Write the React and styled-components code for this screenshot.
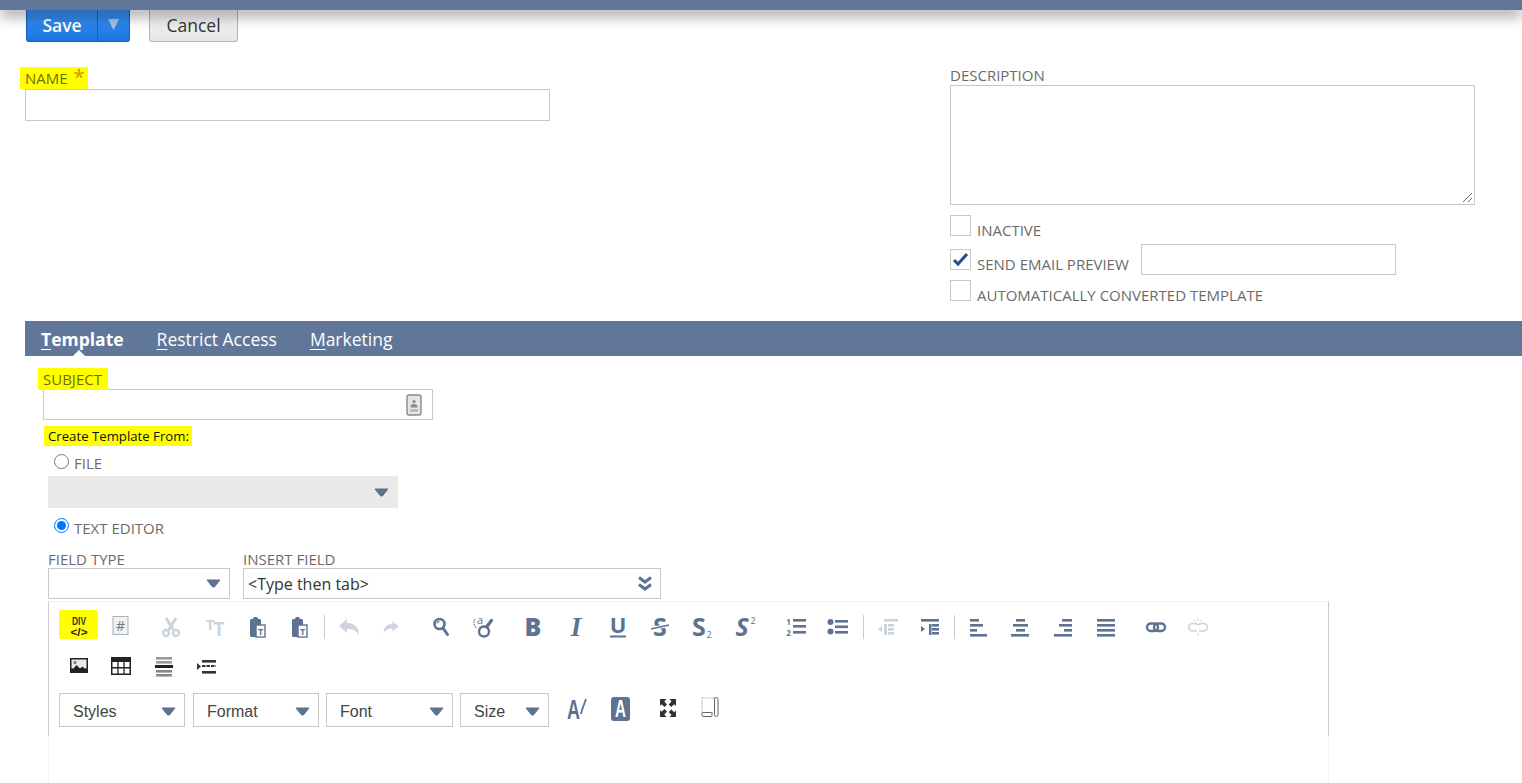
import React from "react";
import styled, { createGlobalStyle } from "styled-components";

const SLATE = "#5d7391";
const FADED = "#cdd4dd";

const Global = createGlobalStyle`
  html, body { margin: 0; padding: 0; background: #fff; overflow: hidden; }
  body { font-family: "Open Sans", "Liberation Sans", sans-serif; color: #666; }
  * { box-sizing: border-box; }
`;

const Page = styled.div`
  width: 1522px;
  height: 783px;
  overflow: hidden;
`;

const TopBar = styled.div`
  position: relative;
  z-index: 2;
  height: 10px;
  background: #607799;
  box-shadow: 0 6px 14px rgba(0, 0, 0, 0.42);
`;

const ButtonRow = styled.div`
  display: flex;
  gap: 19px;
  height: 32px;
  padding-left: 26px;
`;

const SaveButton = styled.div`
  display: flex;
  width: 104px;
  color: #fff;
  background: linear-gradient(#3a94f7, #1c74e2);
  border: 1px solid #1560bd;
  border-top: 0;
  border-radius: 0 0 3px 3px;
`;

const SaveLabel = styled.div`
  width: 71px;
  font-size: 17.5px;
  font-weight: 600;
  line-height: 30px;
  text-align: center;
  border-right: 1px solid #1560bd;
`;

const SaveArrow = styled.div`
  flex: 1;
  display: flex;
  align-items: center;
  justify-content: center;
  padding-bottom: 3px;
`;

const CancelButton = styled.div`
  width: 89px;
  font-size: 17.5px;
  line-height: 30px;
  text-align: center;
  color: #333;
  background: linear-gradient(#f6f6f6, #e6e6e6);
  border: 1px solid #b4b4b4;
  border-top: 0;
  border-radius: 0 0 3px 3px;
`;

const Columns = styled.div`
  display: flex;
  margin-top: 23px;
  padding-left: 25px;
`;

const LeftColumn = styled.div`
  width: 925px;
  padding-top: 2px;
`;

const RightColumn = styled.div`
  width: 525px;
`;

const Label = styled.div`
  font-size: 15px;
  line-height: 20px;
  height: ${(p) => p.$h || 20}px;
  margin-bottom: ${(p) => p.$after || 0}px;
  white-space: nowrap;
  color: #6b6b6b;
  text-transform: uppercase;
`;

const Marked = styled.span`
  display: inline-block;
  margin-left: -5px;
  padding: 1px ${(p) => p.$right || 6}px 1px 5px;
  background: #ffff00;
  color: #6f6f00;
`;

const Star = styled.span`
  margin-left: 6px;
  font-size: 20px;
  line-height: 14px;
  color: #d68a00;
`;

const TextBox = styled.input`
  display: block;
  width: ${(p) => p.$w}px;
  height: ${(p) => p.$h}px;
  margin: 0;
  padding: 0 4px;
  background: #fff;
  border: 1px solid #c8c8c8;
  outline: none;
`;

const DescriptionBox = styled.div`
  position: relative;
  width: 525px;
  height: 120px;
  border: 1px solid #c8c8c8;
`;

const Grip = styled.svg`
  position: absolute;
  right: 1px;
  bottom: 1px;
`;

const CheckRow = styled.div`
  display: flex;
  align-items: flex-start;
  margin-top: ${(p) => p.$top}px;
`;

const Box = styled.div`
  flex: none;
  width: 21px;
  height: 21px;
  margin-top: ${(p) => p.$top || 0}px;
  border: 1px solid #c8c8c8;
  background: #fff;
`;

const CheckLabel = styled(Label)`
  margin: ${(p) => p.$top}px 12px 0 6px;
`;

const TabBar = styled.div`
  display: flex;
  gap: 33px;
  height: 35px;
  margin: 16px 0 0 25px;
  padding-left: 16px;
  background: #607799;
`;

const Tab = styled.div`
  position: relative;
  font-size: 17.5px;
  font-weight: ${(p) => (p.$active ? 700 : 400)};
  line-height: 36px;
  color: #fff;
  u { text-underline-offset: 3px; }
  ${(p) =>
    p.$active &&
    `&::after {
      content: "";
      position: absolute;
      left: 32px;
      bottom: 0;
      border: 6px solid transparent;
      border-top: 0;
      border-bottom-color: #fff;
    }`}
`;

const TabBody = styled.div`
  padding: 12px 0 0 43px;
`;

const SubjectBox = styled.div`
  display: flex;
  align-items: center;
  justify-content: flex-end;
  width: 390px;
  height: 31px;
  padding-right: 10px;
  border: 1px solid #c8c8c8;
`;

const CreateFrom = styled.div`
  width: fit-content;
  margin: 6px 0 0 1px;
  padding: 0 3px 0 4px;
  font-size: 13.2px;
  line-height: 20px;
  color: #111;
  background: #ffff00;
`;

const Indented = styled.div`
  padding-left: 5px;
`;

const RadioRow = styled.div`
  display: flex;
  align-items: flex-start;
  height: ${(p) => p.$h}px;
  margin-top: ${(p) => p.$top}px;
  padding-left: 6px;
`;

const Radio = styled.input`
  width: 15px;
  height: 15px;
  margin: 0 5px 0 0;
`;

const RadioLabel = styled(Label)`
  margin-top: ${(p) => p.$top}px;
`;

const GreySelect = styled.div`
  display: flex;
  align-items: center;
  justify-content: flex-end;
  width: 350px;
  height: 32px;
  padding-right: 9px;
  background: #e9e9e9;
`;

const FieldRow = styled.div`
  display: flex;
  gap: 13px;
  margin-top: 11px;
`;

const SelectBox = styled.div`
  display: flex;
  align-items: center;
  justify-content: space-between;
  width: ${(p) => p.$w}px;
  height: 31px;
  padding: 0 8px 0 4px;
  font-size: 16px;
  color: #333;
  border: 1px solid #c8c8c8;
`;

const Toolbar = styled.div`
  display: flex;
  flex-direction: column;
  gap: 15px;
  width: 1281px;
  margin-top: 2px;
  padding: 13px 0 9px 18px;
  border: 1px solid #ccc;
  border-top-color: #f0f0f0;
  border-bottom: 0;
`;

const ToolRow = styled.div`
  display: flex;
  align-items: center;
  height: 24px;
`;

const Tool = styled.div`
  position: relative;
  flex: none;
  width: 24px;
  height: 24px;
  margin-left: ${(p) => p.$gap || 0}px;
  svg { position: relative; display: block; overflow: visible; }
  ${(p) =>
    p.$marked &&
    `&::before {
      content: "";
      position: absolute;
      left: -8px;
      top: -5px;
      width: 39px;
      height: 29px;
      border-radius: 3px;
      background: #ffff00;
    }`}
`;

const Separator = styled.div`
  flex: none;
  width: 1px;
  height: 24px;
  margin-left: ${(p) => p.$gap}px;
  background: #ccc;
`;

const ComboRow = styled.div`
  display: flex;
  align-items: center;
  height: 34px;
  margin-left: -8px;
`;

const Combo = styled.div`
  display: flex;
  align-items: center;
  justify-content: space-between;
  flex: none;
  width: ${(p) => p.$w}px;
  height: 34px;
  margin-right: ${(p) => p.$after}px;
  padding: 3px 8px 0 13px;
  font-family: "Liberation Sans", Arial, sans-serif;
  font-size: 16px;
  color: #444;
  border: 1px solid #c8c8c8;
`;

const ComboTool = styled(Tool)`
  margin-top: -4px;
`;

const EditorBody = styled.div`
  width: 1281px;
  height: 60px;
  border: 1px solid #f2f2f2;
  border-top: 0;
`;

const Caret = ({ color = SLATE }) => (
  <svg width="15" height="9" viewBox="0 0 15 9">
    <path d="M1 1h13L8.4 8H6.6z" fill={color} stroke={color} strokeLinejoin="round" />
  </svg>
);

const Icon = ({ children }) => (
  <svg width="24" height="24" viewBox="0 0 24 24" fontFamily="Open Sans, sans-serif">
    {children}
  </svg>
);

const Bars = ({ rows, color = SLATE }) => (
  <>
    {rows.map(([x, y, w], i) => (
      <rect key={i} x={x} y={y} width={w} height="2.6" fill={color} />
    ))}
  </>
);

const DivIcon = () => (
  <Icon>
    <text x="12" y="10" textAnchor="middle" fontSize="10.5" fontWeight="700" fill="#333" fontFamily="Liberation Sans, sans-serif" textLength="14" lengthAdjust="spacingAndGlyphs">DIV</text>
    <text x="12" y="21" textAnchor="middle" fontSize="10.5" fontWeight="700" fill="#222" fontFamily="Liberation Sans, sans-serif" textLength="17" lengthAdjust="spacingAndGlyphs">{"</>"}</text>
  </Icon>
);

const HashIcon = () => (
  <Icon>
    <rect x="5" y="1.5" width="15" height="18" fill="#eef2f2" stroke="#aab2b8" />
    <text x="12.5" y="15.5" textAnchor="middle" fontSize="14" fill="#6e7a86">#</text>
  </Icon>
);

const CutIcon = () => (
  <Icon>
    <path d="M7 3l7.500 12M17 3L9.500 15" stroke={FADED} strokeWidth="3" />
    <circle cx="7" cy="18" r="3" fill="none" stroke={FADED} strokeWidth="2.4" />
    <circle cx="17" cy="18" r="3" fill="none" stroke={FADED} strokeWidth="2.4" />
  </Icon>
);

const TextSizeIcon = () => (
  <Icon>
    <text x="7" y="15" textAnchor="middle" fontSize="15" fontWeight="700" fill={FADED}>T</text>
    <text x="16" y="21" textAnchor="middle" fontSize="19" fontWeight="700" fill={FADED}>T</text>
  </Icon>
);

const PasteIcon = () => (
  <Icon>
    <path d="M5 5.500C5 4.500 5.600 4 6.500 4H8c0-1.500 1-2 2.500-2s2.500.5 2.500 2h1.500c.9 0 1.500.5 1.500 1.500V10H11v12H6.500C5.600 22 5 21.400 5 20.500z" fill={SLATE} />
    <rect x="11" y="10" width="9" height="12" fill="#fff" stroke={SLATE} strokeWidth="1.4" />
    <text x="15.5" y="19.5" textAnchor="middle" fontSize="9" fontWeight="700" fill={SLATE}>T</text>
  </Icon>
);

const UndoIcon = ({ flip, small }) => (
  <Icon>
    <path
      d="M2 11l8-7v4c7 0 12 4 12 12-2.500-4-6-6-12-6v4z"
      fill={FADED}
      transform={`${flip ? "translate(24 0) scale(-1 1)" : ""} ${small ? "translate(3 3) scale(.75)" : ""}`}
    />
  </Icon>
);

const FindIcon = () => (
  <Icon>
    <circle cx="10.5" cy="9" r="5" fill="#fff" stroke={SLATE} strokeWidth="2.6" />
    <path d="M14 13l4.500 6.500" stroke={SLATE} strokeWidth="3" strokeLinecap="round" />
    <path d="M8 8.500c.2-1.200 1-2 2.500-2.200" fill="none" stroke={SLATE} strokeWidth="1.2" />
  </Icon>
);

const ReplaceIcon = () => (
  <Icon>
    <text x="8" y="8.5" textAnchor="middle" fontSize="11" fill={SLATE}>a</text>
    <path d="M3 4C1 7 1.500 11 5 13" fill="none" stroke={SLATE} strokeWidth="1.2" strokeDasharray="1.5 1" />
    <circle cx="12" cy="16.5" r="5" fill="none" stroke={SLATE} strokeWidth="2.4" />
    <path d="M14.500 12l5-6.500" stroke={SLATE} strokeWidth="3.4" strokeLinecap="round" />
  </Icon>
);

const LetterIcon = ({ children, italic, serif, size = 25, weight = 700, line, strike, sub, sup }) => (
  <Icon>
    <text
      x={sub || sup ? 9 : 12}
      y={line ? 18 : 21}
      textAnchor="middle"
      fontSize={size}
      fontWeight={weight}
      fontStyle={italic ? "italic" : "normal"}
      fontFamily={serif ? "Liberation Serif, serif" : "Open Sans, sans-serif"}
      fill={SLATE}
    >
      {children}
    </text>
    {line && <rect x="4" y="20.5" width="16" height="2" fill={SLATE} />}
    {strike && <path d="M3 14L21 10" stroke="#fff" strokeWidth="3.5" />}
    {strike && <path d="M3 14L21 10" stroke={SLATE} strokeWidth="1.6" />}
    {sub && <text x="19" y="23" textAnchor="middle" fontSize="9" fill={SLATE}>2</text>}
    {sup && <text x="20" y="9" textAnchor="middle" fontSize="9" fill={SLATE}>2</text>}
  </Icon>
);

const OrderedIcon = () => (
  <Icon>
    <text x="4.5" y="10" textAnchor="middle" fontSize="8" fontWeight="700" fill={SLATE}>1</text>
    <text x="4.5" y="21" textAnchor="middle" fontSize="8" fontWeight="700" fill={SLATE}>2</text>
    <Bars rows={[[9, 4, 13], [9, 10, 13], [9, 16, 13]]} />
  </Icon>
);

const BulletIcon = () => (
  <Icon>
    <circle cx="4.5" cy="7" r="3" fill={SLATE} />
    <circle cx="4.5" cy="16.5" r="3" fill={SLATE} />
    <Bars rows={[[9, 5, 13], [9, 10.5, 13], [9, 16, 13]]} />
  </Icon>
);

const OutdentIcon = () => (
  <Icon>
    <Bars color={FADED} rows={[[8, 4, 14], [12, 9, 6], [12, 13, 6], [12, 17, 6]]} />
    <rect x="8" y="9" width="3" height="11" fill={FADED} />
    <path d="M6 11v6l-4-3z" fill={FADED} />
  </Icon>
);

const IndentIcon = () => (
  <Icon>
    <Bars rows={[[3, 4, 18], [14, 9, 7], [14, 13, 7], [14, 17, 7]]} />
    <rect x="11" y="9" width="2.5" height="11" fill={SLATE} />
    <path d="M3 11v6l4-3z" fill={SLATE} />
  </Icon>
);

const AlignIcon = ({ rows }) => (
  <Icon>
    <Bars rows={rows} />
  </Icon>
);

const LinkIcon = () => (
  <Icon>
    <rect x="3" y="8.5" width="11" height="7.5" rx="3.7" fill="none" stroke={SLATE} strokeWidth="2.4" />
    <rect x="10" y="8.5" width="11" height="7.5" rx="3.7" fill="none" stroke={SLATE} strokeWidth="2.4" />
  </Icon>
);

const UnlinkIcon = () => (
  <Icon>
    <path d="M11 8.500H6.500a3.700 3.700 0 000 7.500H11M13 8.500h4.500a3.700 3.700 0 010 7.500H13" fill="none" stroke={FADED} strokeWidth="1.6" />
    <path d="M9 9.500h6M12 3v3M12 18v3M8 4.500l1.500 2M16 4.500l-1.500 2" stroke={FADED} strokeWidth="1" />
  </Icon>
);

const ImageIcon = () => (
  <Icon>
    <rect x="3" y="4" width="18" height="15" fill="#222" />
    <rect x="4.5" y="5.5" width="15" height="9" fill="#e8e8e8" />
    <path d="M4.500 17l5-6 3.500 3.500 2.500-2 4 4v1H4.500z" fill="#222" />
    <circle cx="8" cy="8.5" r="1.5" fill="#777" />
  </Icon>
);

const TableIcon = () => (
  <Icon>
    <rect x="2" y="3" width="20" height="18" fill="#222" />
    <g fill="#fff">
      <rect x="3.5" y="8" width="4.8" height="5" />
      <rect x="9.6" y="8" width="4.8" height="5" />
      <rect x="15.7" y="8" width="4.8" height="5" />
      <rect x="3.5" y="14.5" width="4.8" height="5" />
      <rect x="9.6" y="14.5" width="4.8" height="5" />
      <rect x="15.7" y="14.5" width="4.8" height="5" />
    </g>
  </Icon>
);

const RuleIcon = () => (
  <Icon>
    <Bars color="#999" rows={[[4, 3, 16], [4, 7, 16]]} />
    <rect x="3" y="11" width="18" height="3" fill="#222" />
    <Bars color="#888" rows={[[4, 16, 16], [4, 20, 16]]} />
  </Icon>
);

const PageBreakIcon = () => (
  <Icon>
    <path d="M3 9v7l4-3.500z" fill="#333" />
    <Bars color="#333" rows={[[8, 6, 14], [8, 17, 14]]} />
    <path d="M8 12h14" stroke="#333" strokeWidth="2" strokeDasharray="3.5 1" />
  </Icon>
);

const TextColorIcon = () => (
  <Icon>
    <text x="8.5" y="23" textAnchor="middle" fontSize="27" fontWeight="700" fill={SLATE} fontFamily="Liberation Sans, sans-serif" textLength="13" lengthAdjust="spacingAndGlyphs">A</text>
    <path d="M21 3l-4 11-1 4" stroke={SLATE} strokeWidth="1.8" />
  </Icon>
);

const BackColorIcon = () => (
  <Icon>
    <rect x="3" y="1" width="19" height="24" rx="3" fill={SLATE} />
    <text x="12.5" y="21" textAnchor="middle" fontSize="24" fontWeight="700" fill="#fff" fontFamily="Liberation Sans, sans-serif" textLength="11" lengthAdjust="spacingAndGlyphs">A</text>
  </Icon>
);

const MaximizeIcon = () => (
  <Icon>
    <path d="M4 3h6.500L8.300 5.500 11 8.500 8.500 11 5.500 8.300 4 10zM20 3v7l-1.800-1.700-3 2.700-2.500-2.500 2.800-3L13.500 3zM4 21v-7l1.500 1.700 3-2.700 2.500 2.500-2.700 3L10.500 21zM20 21h-6.500l2-2-2.800-3 2.500-2.500 3 2.700L20 14.500z" fill="#333" />
  </Icon>
);

const ShowBlocksIcon = () => (
  <Icon>
    <rect x="4" y="2" width="13" height="15" fill="none" stroke="#aaa" strokeDasharray="1.5 1" />
    <rect x="4" y="16.5" width="10" height="4" rx="1" fill="#fff" stroke="#666" />
    <rect x="16.5" y="1.500" width="3.500" height="19" rx="1.700" fill="#fff" stroke="#666" />
  </Icon>
);

const ContactIcon = () => (
  <svg width="16" height="22" viewBox="0 0 16 22">
    <rect x="1" y="1" width="14" height="20" rx="2" fill="#e4e4e4" stroke="#888" strokeWidth="1.4" />
    <circle cx="8" cy="7.5" r="1.6" fill="#888" />
    <path d="M4.500 13.500c0-2.500 1.200-3.500 3.500-3.500s3.500 1 3.500 3.500z" fill="#888" />
    <rect x="4" y="15.5" width="8" height="2" fill="#aaa" />
  </svg>
);

const firstRow = [
  { gap: 0, icon: <DivIcon />, marked: true },
  { gap: 17, icon: <HashIcon /> },
  { gap: 27, icon: <CutIcon /> },
  { gap: 20, icon: <TextSizeIcon /> },
  { gap: 18, icon: <PasteIcon /> },
  { gap: 18, icon: <PasteIcon /> },
  { gap: 13, sep: true },
  { gap: 12, icon: <UndoIcon /> },
  { gap: 18, icon: <UndoIcon flip small /> },
  { gap: 26, icon: <FindIcon /> },
  { gap: 19, icon: <ReplaceIcon /> },
  { gap: 25, icon: <LetterIcon weight={800}>B</LetterIcon> },
  { gap: 19, icon: <LetterIcon italic serif size={27}>I</LetterIcon> },
  { gap: 18, icon: <LetterIcon size={22} line>U</LetterIcon> },
  { gap: 18, icon: <LetterIcon strike>S</LetterIcon> },
  { gap: 18, icon: <LetterIcon sub>S</LetterIcon> },
  { gap: 19, icon: <LetterIcon italic sup>S</LetterIcon> },
  { gap: 27, icon: <OrderedIcon /> },
  { gap: 18, icon: <BulletIcon /> },
  { gap: 13, sep: true },
  { gap: 12, icon: <OutdentIcon /> },
  { gap: 18, icon: <IndentIcon /> },
  { gap: 12, sep: true },
  { gap: 11, icon: <AlignIcon rows={[[4, 4, 9], [4, 9, 13], [4, 14, 7], [4, 19, 17]]} /> },
  { gap: 18, icon: <AlignIcon rows={[[8, 4, 9], [5, 9, 15], [8, 14, 9], [3, 19, 18]]} /> },
  { gap: 19, icon: <AlignIcon rows={[[11, 4, 10], [8, 9, 13], [13, 14, 8], [3, 19, 18]]} /> },
  { gap: 19, icon: <AlignIcon rows={[[3, 4, 18], [3, 9, 18], [3, 14, 18], [3, 19, 18]]} /> },
  { gap: 26, icon: <LinkIcon /> },
  { gap: 18, icon: <UnlinkIcon /> },
];

const secondRow = [
  { gap: 0, icon: <ImageIcon /> },
  { gap: 18, icon: <TableIcon /> },
  { gap: 19, icon: <RuleIcon /> },
  { gap: 18, icon: <PageBreakIcon /> },
];

const ToolItems = ({ items }) =>
  items.map((t, i) =>
    t.sep ? (
      <Separator key={i} $gap={t.gap} />
    ) : (
      <Tool key={i} $gap={t.gap} $marked={t.marked}>
        {t.icon}
      </Tool>
    )
  );

const App = () => {
  return (
    <Page>
      <Global />
      <TopBar />
      <ButtonRow>
        <SaveButton>
          <SaveLabel>Save</SaveLabel>
          <SaveArrow>
            <svg width="11" height="11" viewBox="0 0 11 11">
              <path d="M0 0h11L5.500 11z" fill="#aac4e4" />
            </svg>
          </SaveArrow>
        </SaveButton>
        <CancelButton>Cancel</CancelButton>
      </ButtonRow>

      <Columns>
        <LeftColumn>
          <Label $after={2}>
            <Marked $right={3}>
              Name<Star>*</Star>
            </Marked>
          </Label>
          <TextBox $w={525} $h={32} />
        </LeftColumn>
        <RightColumn>
          <Label>Description</Label>
          <DescriptionBox>
            <Grip width="12" height="12" viewBox="0 0 12 12">
              <path d="M11 2l-9 9M11 7l-4 4" stroke="#666" strokeWidth="1" />
            </Grip>
          </DescriptionBox>
          <CheckRow $top={10}>
            <Box />
            <CheckLabel $top={5}>Inactive</CheckLabel>
          </CheckRow>
          <CheckRow $top={4}>
            <Box $top={5}>
              <svg width="19" height="19" viewBox="0 0 19 19">
                <path d="M3 10l4 4 9-10" fill="none" stroke="#24508f" strokeWidth="3" />
              </svg>
            </Box>
            <CheckLabel $top={10}>Send Email Preview</CheckLabel>
            <TextBox $w={255} $h={31} />
          </CheckRow>
          <CheckRow $top={5}>
            <Box />
            <CheckLabel $top={5}>Automatically Converted Template</CheckLabel>
          </CheckRow>
        </RightColumn>
      </Columns>

      <TabBar>
        <Tab $active>
          <u>T</u>emplate
        </Tab>
        <Tab>
          <u>R</u>estrict Access
        </Tab>
        <Tab>
          <u>M</u>arketing
        </Tab>
      </TabBar>

      <TabBody>
        <Label $after={1}>
          <Marked>Subject</Marked>
        </Label>
        <SubjectBox>
          <ContactIcon />
        </SubjectBox>
        <CreateFrom>Create Template From:</CreateFrom>
        <Indented>
          <RadioRow $h={22} $top={8}>
            <Radio type="radio" name="source" readOnly />
            <RadioLabel $top={-1}>File</RadioLabel>
          </RadioRow>
          <GreySelect>
            <Caret />
          </GreySelect>
          <RadioRow $h={20} $top={10}>
            <Radio type="radio" name="source" defaultChecked />
            <RadioLabel $top={0}>Text Editor</RadioLabel>
          </RadioRow>
          <FieldRow>
            <div>
              <Label $h={19}>Field Type</Label>
              <SelectBox $w={182}>
                <span />
                <Caret />
              </SelectBox>
            </div>
            <div>
              <Label $h={19}>Insert Field</Label>
              <SelectBox $w={418}>
                <span>{"<Type then tab>"}</span>
                <svg width="14" height="16" viewBox="0 0 14 16">
                  <path d="M1 1.500l6 4.500 6-4.500M1 8.500l6 4.500 6-4.500" fill="none" stroke={SLATE} strokeWidth="3" />
                </svg>
              </SelectBox>
            </div>
          </FieldRow>
          <Toolbar>
            <ToolRow>
              <ToolItems items={firstRow} />
            </ToolRow>
            <ToolRow>
              <ToolItems items={secondRow} />
            </ToolRow>
            <ComboRow>
              <Combo $w={126} $after={8}>
                Styles <Caret />
              </Combo>
              <Combo $w={126} $after={7}>
                Format <Caret />
              </Combo>
              <Combo $w={127} $after={7}>
                Font <Caret />
              </Combo>
              <Combo $w={89} $after={7}>
                Size <Caret />
              </Combo>
              <ComboTool $gap={9}>
                <TextColorIcon />
              </ComboTool>
              <ComboTool $gap={19}>
                <BackColorIcon />
              </ComboTool>
              <ComboTool $gap={24}>
                <MaximizeIcon />
              </ComboTool>
              <ComboTool $gap={18}>
                <ShowBlocksIcon />
              </ComboTool>
            </ComboRow>
          </Toolbar>
          <EditorBody />
        </Indented>
      </TabBody>
    </Page>
  );
};

export default App;
